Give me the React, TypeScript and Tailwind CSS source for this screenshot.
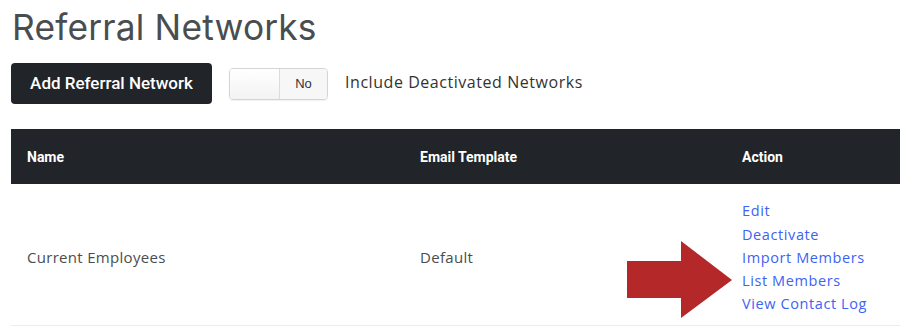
export default function App() {
  const actions = ["Edit", "Deactivate", "Import Members", "List Members", "View Contact Log"];

  return (
    <div className="relative w-[900px] h-[328px] overflow-hidden bg-white font-['Karla','Open_Sans',sans-serif]">
      {/* Title */}
      <h1 className="pl-[12px] pt-[8px] text-[35.3px] leading-[40px] text-[#4a4d50] font-['Inter',sans-serif] font-normal tracking-[0.2px]">
        Referral Networks
      </h1>

      {/* Toolbar */}
      <div className="flex items-center mt-[15px] pl-[11px]">
        <button className="h-[41px] w-[201px] rounded-[4px] bg-[#212529] text-white text-[17px] font-['Roboto',sans-serif] font-medium">
          Add Referral Network
        </button>
        <div className="ml-[17px] flex h-[32px] w-[99px] rounded-[4px] border border-[#d4d4d4] overflow-hidden shadow-[0_1px_1px_rgba(0,0,0,0.06)]">
          <div className="w-[50px] bg-gradient-to-b from-white to-[#f3f3f3] border-r border-[#dcdcdc]" />
          <div className="flex-1 flex items-center justify-center bg-[#f7f7f7] text-[13px] text-[#333] font-['Liberation_Sans',sans-serif]">
            No
          </div>
        </div>
        <span className="ml-[17px] -mt-[3px] text-[16px] text-[#333] font-['Open_Sans',sans-serif] tracking-[0.55px]">
          Include Deactivated Networks
        </span>
      </div>

      {/* Table */}
      <div className="ml-[11px] mt-[25px]">
        <div className="flex items-center h-[55px] bg-[#212529] text-white text-[14px] font-['Roboto',sans-serif] font-bold">
          <div className="w-[393px] pl-[16px] pt-[2px]">Name</div>
          <div className="w-[322px] pl-[16px] pt-[2px]">Email Template</div>
          <div className="flex-1 pl-[16px] pt-[2px]">Action</div>
        </div>
        <div className="flex items-center h-[142px] border-b border-[#ececec] text-[15px] text-[#4a4d50] font-['Open_Sans',sans-serif] tracking-[0.3px]">
          <div className="w-[393px] pl-[16px] pt-[5px]">Current Employees</div>
          <div className="w-[322px] pl-[16px] pt-[5px]">Default</div>
          <div className="flex-1 pl-[16px] pt-[6px] flex flex-col text-[14.5px] leading-[23.2px] text-[#3d63f5] tracking-[0.6px]">
            {actions.map((a) => (
              <a key={a} href="#" className="w-fit">
                {a}
              </a>
            ))}
          </div>
        </div>
      </div>

      {/* Callout arrow */}
      <svg className="absolute left-[626px] top-[240px]" width="108" height="80" viewBox="0 0 108 80">
        <polygon points="1,21 55,21 55,1 106,40 55,78 55,58 1,58" fill="#b4282a" />
      </svg>
    </div>
  );
}
